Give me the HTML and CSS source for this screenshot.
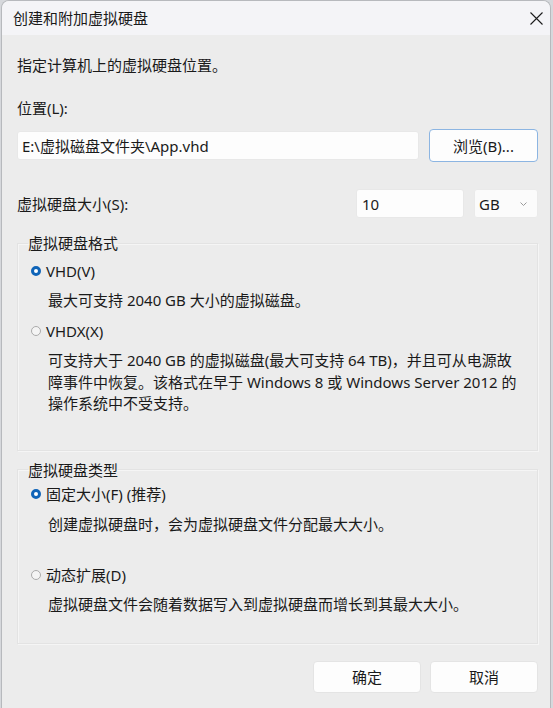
FILE: index.html
```html
<!DOCTYPE html>
<html lang="zh-CN">

<head>
  <meta charset="UTF-8" />
  <meta name="viewport" content="width=device-width, initial-scale=1.0">
  <title>创建和附加虚拟硬盘</title>
  <link rel="stylesheet" href="styles.css">
</head>

<body>
  <div class="window">
    <div class="titlebar">
      <span class="title">创建和附加虚拟硬盘</span>
      <svg class="close" width="13" height="13" viewBox="0 0 13 13">
        <path d="M0.5 0.5 L12.5 12.5 M12.5 0.5 L0.5 12.5" stroke="#1c1c1c" stroke-width="1.1" fill="none" />
      </svg>
    </div>

    <div class="content">
      <p class="intro">指定计算机上的虚拟硬盘位置。</p>

      <label class="field-label" for="path">位置(L):</label>
      <div class="path-row">
        <div class="textbox path" id="path">E:\虚拟磁盘文件夹\App.vhd</div>
        <button class="btn btn-default">浏览(B)...</button>
      </div>

      <div class="size-row">
        <span class="size-label">虚拟硬盘大小(S):</span>
        <div class="textbox size">10</div>
        <div class="combo">
          <span>GB</span>
          <svg width="7" height="4" viewBox="0 0 7 4">
            <path d="M0.5 0.5 L3.5 3.5 L6.5 0.5" stroke="#9a9a9a" stroke-width="1" fill="none" />
          </svg>
        </div>
      </div>

      <fieldset class="group group-format">
        <legend>虚拟硬盘格式</legend>
        <div class="option first"><span class="radio on"></span>VHD(V)</div>
        <p class="desc">最大可支持 2040 GB 大小的虚拟磁盘。</p>
        <div class="option second"><span class="radio"></span>VHDX(X)</div>
        <p class="desc para">可支持大于 2040 GB 的虚拟磁盘(最大可支持 64 TB)，并且可从电源故<br>障事件中恢复。该格式在早于 Windows 8 或 Windows Server 2012 的<br>操作系统中不受支持。</p>
      </fieldset>

      <fieldset class="group group-type">
        <legend>虚拟硬盘类型</legend>
        <div class="option first"><span class="radio on"></span>固定大小(F) (推荐)</div>
        <p class="desc">创建虚拟硬盘时，会为虚拟硬盘文件分配最大大小。</p>
        <div class="option second"><span class="radio"></span>动态扩展(D)</div>
        <p class="desc">虚拟硬盘文件会随着数据写入到虚拟硬盘而增长到其最大大小。</p>
      </fieldset>

      <div class="actions">
        <button class="btn">确定</button>
        <button class="btn">取消</button>
      </div>
    </div>
  </div>
</body>

</html>
```

FILE: styles.css
```css
html,
body {
  height: 100%;
}

body {
  margin: 0;
  padding: 0;
  background: #d6d8dc;
  font-family: 'Noto Sans', 'Noto Sans CJK SC', sans-serif;
  font-size: 15px;
  color: #1a1a1a;
  overflow: hidden;
}

.window {
  box-sizing: border-box;
  width: 550px;
  height: 708px;
  margin-left: 1px;
  border: 1px solid #b7b9bd;
  border-bottom: none;
  border-radius: 8px 8px 0 0;
  background: #ececec;
  overflow: hidden;
}

.titlebar {
  height: 34px;
  display: flex;
  align-items: center;
  justify-content: space-between;
  padding: 0 7px 0 11px;
  background: #f4f4f7;
}

.title {
  line-height: 20px;
}

.content {
  padding: 0 12px 0 15px;
}

.intro {
  margin: 20px 0 0;
  line-height: 20px;
}

.field-label {
  display: block;
  margin-top: 23px;
  line-height: 20px;
}

.path-row {
  display: flex;
  align-items: center;
  gap: 10px;
  height: 33px;
  margin-top: 11px;
}

.textbox {
  box-sizing: border-box;
  display: flex;
  align-items: center;
  height: 29px;
  padding-left: 4px;
  background: #fdfdfd;
  border: 1px solid #e8e8e8;
  border-radius: 3px;
}

.path {
  flex: 1;
}

.btn {
  box-sizing: border-box;
  width: 108px;
  height: 32px;
  font-family: inherit;
  font-size: 15px;
  color: #1a1a1a;
  background: #fdfdfd;
  border: 1px solid #e4e4e4;
  border-radius: 4px;
  padding: 0;
}

.btn-default {
  width: 109px;
  height: 33px;
  border-color: #8cb5e2;
}

.size-row {
  display: flex;
  align-items: center;
  height: 29px;
  margin-top: 27px;
}

.size {
  width: 108px;
  margin-left: auto;
  padding-left: 5px;
}

.combo {
  box-sizing: border-box;
  display: flex;
  align-items: center;
  justify-content: space-between;
  width: 64px;
  height: 29px;
  margin-left: 10px;
  padding: 0 10px 0 4px;
  background: #fbfbfb;
  border: 1px solid #eaeaea;
  border-radius: 3px;
}

.group {
  margin: 15px 0 0;
  padding: 0 0 35px;
  min-width: 0;
  border: 1px solid #e3e3e3;
  box-shadow: inset 1px 1px 0 #f5f5f5, 1px 1px 0 #f5f5f5;
}

.group legend {
  padding: 0;
  margin-left: 10px;
  line-height: 20px;
}

.option {
  display: flex;
  align-items: center;
  line-height: 20px;
}

.radio {
  box-sizing: border-box;
  width: 10px;
  height: 10px;
  margin: 0 5px 0 13px;
  border-radius: 50%;
  border: 1px solid #ababab;
  background: #f4f4f4;
}

.radio.on {
  border: 3px solid #0f64b8;
  background: #fff;
}

.desc {
  margin: 9px 0 0;
  padding-left: 30px;
  line-height: 20px;
}

.group-format .option.first {
  margin-top: 8px;
}

.group-format .option.second {
  margin-top: 11px;
}

.para {
  line-height: 21.5px;
}

.group-type {
  margin-top: 9px;
  padding-bottom: 29px;
}

.group-type .option.first {
  margin-top: 4px;
}

.group-type .desc {
  margin-top: 10px;
}

.group-type .option.second {
  margin-top: 31px;
}

.group-type .option.second+.desc {
  margin-top: 9px;
}

.actions {
  display: flex;
  justify-content: flex-end;
  gap: 9px;
  margin-top: 17px;
}
```
